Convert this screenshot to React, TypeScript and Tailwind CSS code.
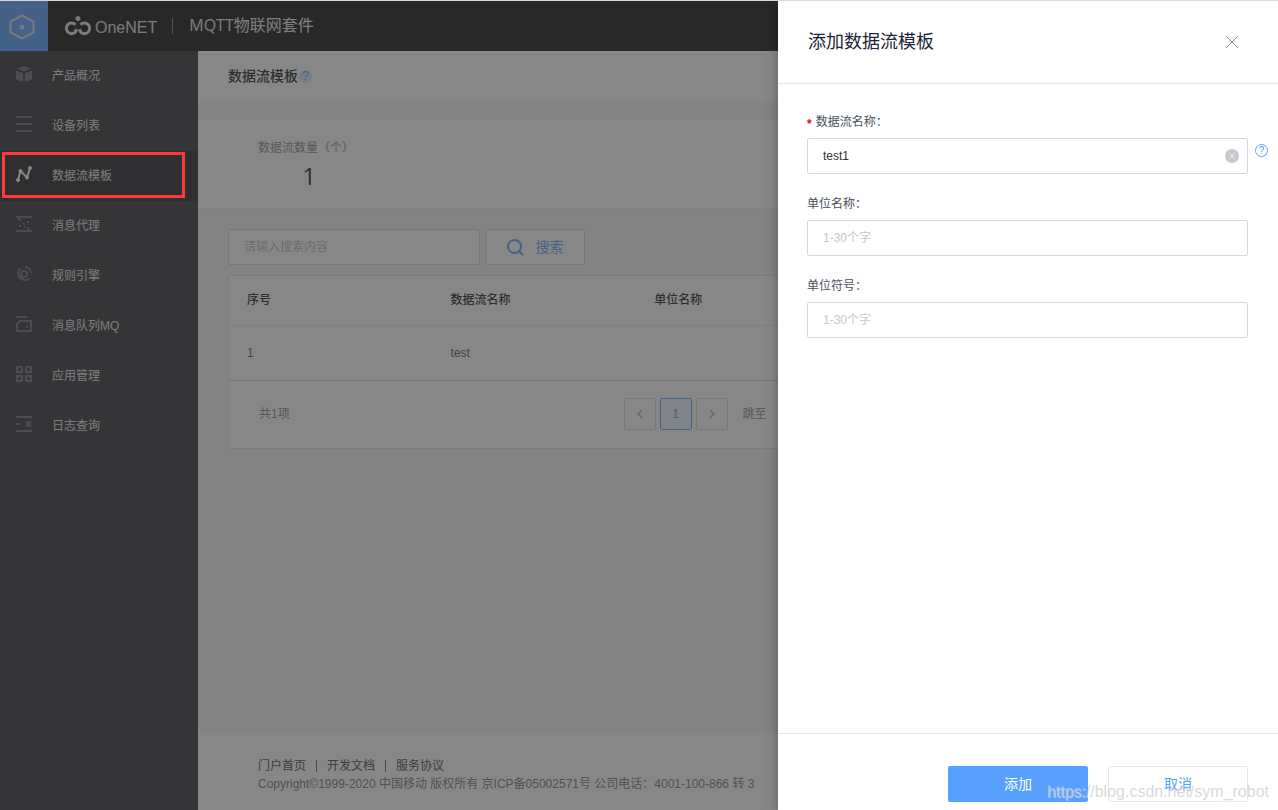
import type { ReactNode } from "react";

const menuItems: { name: string; icon: ReactNode; active?: boolean }[] = [
  {
    name: "产品概况",
    icon: (
      <g fill="currentColor">
        <path d="M8 0l7 2.600L8 5.400 1 2.600z" />
        <path d="M0 4.600l7 2.700V16l-7-2.600z" />
        <path d="M16 4.600L9 7.300V16l7-2.600z" />
      </g>
    ),
  },
  {
    name: "设备列表",
    icon: <path d="M0 1h16M0 8h16M0 15h16" stroke="currentColor" strokeWidth="2" />,
  },
  {
    name: "数据流模板",
    active: true,
    icon: (
      <g fill="currentColor" stroke="currentColor">
        <path d="M2 14L4.500 5l6.500 6.500L14 2" fill="none" strokeWidth="2" />
        <circle cx="2" cy="14" r="1.500" />
        <circle cx="4.500" cy="5" r="1.500" />
        <circle cx="11" cy="11.500" r="1.500" />
        <circle cx="14" cy="2" r="1.500" />
      </g>
    ),
  },
  {
    name: "消息代理",
    icon: (
      <g fill="none" stroke="currentColor" strokeWidth="2">
        <path d="M16 1H1.500l3.500 3.500M0 15h14.500L11 11.500" />
        <path d="M3 10h2M7 8h2M11 6h2M8 11h1" />
      </g>
    ),
  },
  {
    name: "规则引擎",
    icon: (
      <g fill="none" stroke="currentColor" strokeWidth="2">
        <circle cx="8" cy="8" r="3" />
        <path d="M9 1a7 7 0 0 1 6 6M4 2.300A7 7 0 0 0 13.500 12.500" />
      </g>
    ),
  },
  {
    name: "消息队列MQ",
    icon: (
      <g fill="none" stroke="currentColor" strokeWidth="2">
        <path d="M0 1h11M4 5h11v10H1V8z" />
        <path d="M10 11h2" />
      </g>
    ),
  },
  {
    name: "应用管理",
    icon: (
      <path
        d="M1 1h5v5H1zM10 1h5v5h-5zM1 10h5v5H1zM10 10h5v5h-5z"
        fill="none"
        stroke="currentColor"
        strokeWidth="2"
      />
    ),
  },
  {
    name: "日志查询",
    icon: (
      <path
        d="M0 1h16M0 15h16M0 8h4M10 5.500l5 5M15 5.500l-5 5"
        stroke="currentColor"
        strokeWidth="2"
      />
    ),
  },
];

const footerLinks = ["门户首页", "开发文档", "服务协议"];

function Header() {
  return (
    <header className="flex h-[50px] items-center bg-[#131313]">
      <a href="#" aria-label="首页" className="flex h-full w-12 items-center justify-center bg-[#58a0ff] pt-0.5 pr-1">
        <svg width="26" height="26" viewBox="0 0 26 26" fill="none" stroke="#dcdcdc" strokeWidth="2">
          <path d="M13 1.500l11.500 6v11L13 24.500l-11.500-6v-11z" />
          <circle cx="13" cy="13" r="2.500" fill="#dcdcdc" stroke="none" />
        </svg>
      </a>
      <div className="ml-4 flex items-center gap-[3px] pt-1 text-[#e0e0e0]">
        <svg width="28" height="20" viewBox="0 0 28 20" fill="none" stroke="currentColor" strokeWidth="3" className="mb-1">
          <path d="M11.500 8.700A5.300 5.300 0 1 0 12.200 15M16.500 8.700A5.300 5.300 0 1 1 15.800 15" />
          <path d="M11.200 15.800l1.600-2.600M16.800 15.800l-1.600-2.600" />
          <path d="M14 0v5M11.500 2.500h5" strokeWidth="2.500" />
        </svg>
        <span className="text-base leading-5 font-medium">OneNET</span>
      </div>
      <span className="ml-[15px] h-4 w-px bg-[#777]" />
      <h1 className="ml-4 pb-0.5 font-['Open_Sans','Noto_Sans_CJK_SC',sans-serif] text-base text-[#e8e8e8]">MQTT物联网套件</h1>
    </header>
  );
}

function Sidebar() {
  return (
    <nav className="w-[198px] shrink-0 bg-[#323237]">
      {menuItems.map((item) => (
        <a
          key={item.name}
          href="#"
          className={`flex h-[50px] items-center gap-5 pl-4 ${
            item.active ? "bg-[#25252a] text-white" : "text-[#6c6f7a]"
          }`}
        >
          <svg width="16" height="16" viewBox="0 0 16 16" className="mb-1">
            {item.icon}
          </svg>
          <span className="text-[#e6e6e6]">{item.name}</span>
        </a>
      ))}
    </nav>
  );
}

function StreamTable() {
  return (
    <div className="mt-[10px] border border-[#e3e3e6] bg-white">
      <table className="w-full table-fixed text-left">
        <thead>
          <tr className="h-[49px] border-b border-[#e9eaec] text-[#222]">
            <th className="px-[18px] font-medium">序号</th>
            <th className="px-[18px] font-medium">数据流名称</th>
            <th className="px-[18px] font-medium">单位名称</th>
            <td />
            <td />
          </tr>
        </thead>
        <tbody>
          <tr className="h-[55px] border-b border-[#d7d8dc] text-[#555]">
            <td className="px-[18px]">1</td>
            <td className="px-[18px]">test</td>
            <td />
            <td />
            <td />
          </tr>
        </tbody>
      </table>
      <div className="flex h-[67px] items-center">
        <span className="flex-1 pl-[30px] text-[#888]">共1项</span>
        <div className="flex items-center gap-1">
          <button aria-label="上一页" className="flex size-8 items-center justify-center rounded-xs border border-[#dddee1] text-[#aaa]">
            <svg width="6" height="10" viewBox="0 0 6 10" fill="none" stroke="currentColor" strokeWidth="1.500">
              <path d="M5 1L1 5l4 4" />
            </svg>
          </button>
          <button className="size-8 rounded-xs border border-[#58a0ff] bg-[#eef5ff] text-[#58a0ff]">1</button>
          <button aria-label="下一页" className="flex size-8 items-center justify-center rounded-xs border border-[#dddee1] text-[#aaa]">
            <svg width="6" height="10" viewBox="0 0 6 10" fill="none" stroke="currentColor" strokeWidth="1.500">
              <path d="M1 1l4 4-4 4" />
            </svg>
          </button>
          <label className="ml-[11px] flex items-center gap-3 text-[#888]">
            跳至
            <input className="mr-5 h-8 w-[52px] rounded-xs border border-[#dddee1]" />
          </label>
        </div>
        <span className="flex-1 pr-8" />
      </div>
    </div>
  );
}

function Content() {
  return (
    <main className="flex flex-1 flex-col bg-[#f4f4f4]">
      <div className="flex h-[50px] items-center bg-white pl-[30px]">
        <h2 className="text-sm font-medium text-[#222]">数据流模板</h2>
        <span className="ml-px flex size-[13px] items-center justify-center rounded-full bg-[#d6e6ff] text-[#58a0ff]">?</span>
      </div>
      <section className="mt-[17px] border-y border-[#ebebee] bg-white">
        <div className="ml-[60px] flex h-[89px] w-[102px] flex-col pt-[21px]">
          <p className="whitespace-nowrap leading-4 text-[#888]">数据流数量（个）</p>
          <p className="mt-1 text-center font-['Open_Sans',sans-serif] text-2xl text-[#222]">1</p>
        </div>
      </section>
      <section className="px-[30px] pt-5">
        <form className="flex gap-[5px]">
          <input
            aria-label="搜索内容"
            placeholder="请输入搜索内容"
            className="h-9 w-[252px] rounded-xs border border-[#d5d6da] bg-white px-[15px] placeholder:text-[#bbbec4]"
          />
          <button
            type="button"
            className="flex h-9 w-[100px] items-center justify-center gap-3 rounded-xs border border-[#d5d6da] bg-white text-sm text-[#58a0ff]"
          >
            <svg width="17" height="17" viewBox="0 0 17 17" fill="none" stroke="currentColor" strokeWidth="2">
              <circle cx="7.500" cy="7.500" r="6.500" />
              <path d="M12 12l4 4" />
            </svg>
            搜索
          </button>
        </form>
        <StreamTable />
      </section>
      <footer className="mt-auto h-[77px] bg-white pt-6 pl-[60px]">
        <ul className="flex leading-[18px]">
          {footerLinks.map((link, i) => (
            <li key={link} className="flex items-center">
              {i > 0 && <span className="mx-[10px] h-3 w-px bg-[#666]" />}
              <a href="#" className="text-[#444]">{link}</a>
            </li>
          ))}
        </ul>
        <p className="leading-[18px] text-[#777]">
          Copyright©1999-2020 中国移动 版权所有 京ICP备05002571号 公司电话：4001-100-866 转 3
        </p>
      </footer>
    </main>
  );
}

function Field({ id, label, placeholder }: { id: string; label: string; placeholder: string }) {
  return (
    <div>
      <label htmlFor={id} className="block leading-5 text-[#495060]">{label}</label>
      <input
        id={id}
        placeholder={placeholder}
        className="mt-[6px] block h-9 w-full rounded-xs border border-[#d7d8dc] px-[15px] placeholder:text-[#c5c8ce]"
      />
    </div>
  );
}

function Drawer() {
  return (
    <aside className="absolute top-0 right-0 bottom-0 flex w-[500px] flex-col bg-white shadow-[0_4px_12px_rgba(0,0,0,0.3)]">
      <div className="flex h-[83px] items-center justify-between border-b border-[#e5e6e9] pr-10 pl-[30px]">
        <h2 className="text-lg text-[#1c2438]">添加数据流模板</h2>
        <button aria-label="关闭">
          <svg width="12" height="12" viewBox="0 0 12 12" stroke="#999" fill="none">
            <path d="M0 0l12 12M12 0L0 12" />
          </svg>
        </button>
      </div>
      <form className="flex flex-1 flex-col gap-5 pt-7 pr-[30px] pl-[29px]">
        <div>
          <label htmlFor="stream-name" className="flex h-5 items-center gap-1 leading-5 text-[#495060]">
            <span className="pt-1 font-bold text-[#f00]">*</span>数据流名称：
          </label>
          <div className="relative mt-[6px]">
            <input
              id="stream-name"
              defaultValue="test1"
              className="block h-9 w-full rounded-xs border border-[#d7d8dc] px-[15px] text-[#333]"
            />
            <button type="button" aria-label="清空" className="absolute top-[11px] right-[9px]">
              <svg width="14" height="14" viewBox="0 0 14 14">
                <circle cx="7" cy="7" r="7" fill="#c5c8ce" />
                <path d="M4 4l6 6M10 4l-6 6" stroke="#e8eaec" />
              </svg>
            </button>
            <span className="absolute top-[6px] -right-5 flex size-[13px] items-center justify-center rounded-full border border-[#58a0ff] text-[10px] text-[#58a0ff]">
              ?
            </span>
          </div>
        </div>
        <Field id="unit-name" label="单位名称：" placeholder="1-30个字" />
        <Field id="unit-symbol" label="单位符号：" placeholder="1-30个字" />
      </form>
      <div className="flex h-[77px] justify-end gap-5 border-t border-[#e5e6e9] pt-8 pr-[30px] text-sm">
        <button className="h-9 w-[140px] rounded-xs bg-[#58a0ff] text-white">添加</button>
        <button className="h-9 w-[140px] rounded-xs border border-[#e5e6e9] text-[#58a0ff]">取消</button>
      </div>
    </aside>
  );
}

export default function App() {
  return (
    <div className="relative flex min-h-screen flex-col overflow-hidden border-t border-[#d9d9de] font-['Liberation_Sans','Noto_Sans_CJK_SC',sans-serif] text-xs">
      <Header />
      <div className="flex flex-1">
        <Sidebar />
        <Content />
      </div>

      {/* Mask */}
      <div className="absolute inset-0 bg-[rgba(55,55,55,0.6)]" />
      <Drawer />

      {/* Highlight around the current menu entry */}
      <div className="absolute top-[151px] left-[2px] h-[46px] w-[183px] border-3 border-[#ff3838]" />
      <p className="absolute right-[9px] bottom-1.5 text-base leading-6 text-[#c8c8c8]/70 [text-shadow:1px_1px_0_rgba(255,255,255,0.5)]">
        https://blog.csdn.net/sym_robot
      </p>
    </div>
  );
}
